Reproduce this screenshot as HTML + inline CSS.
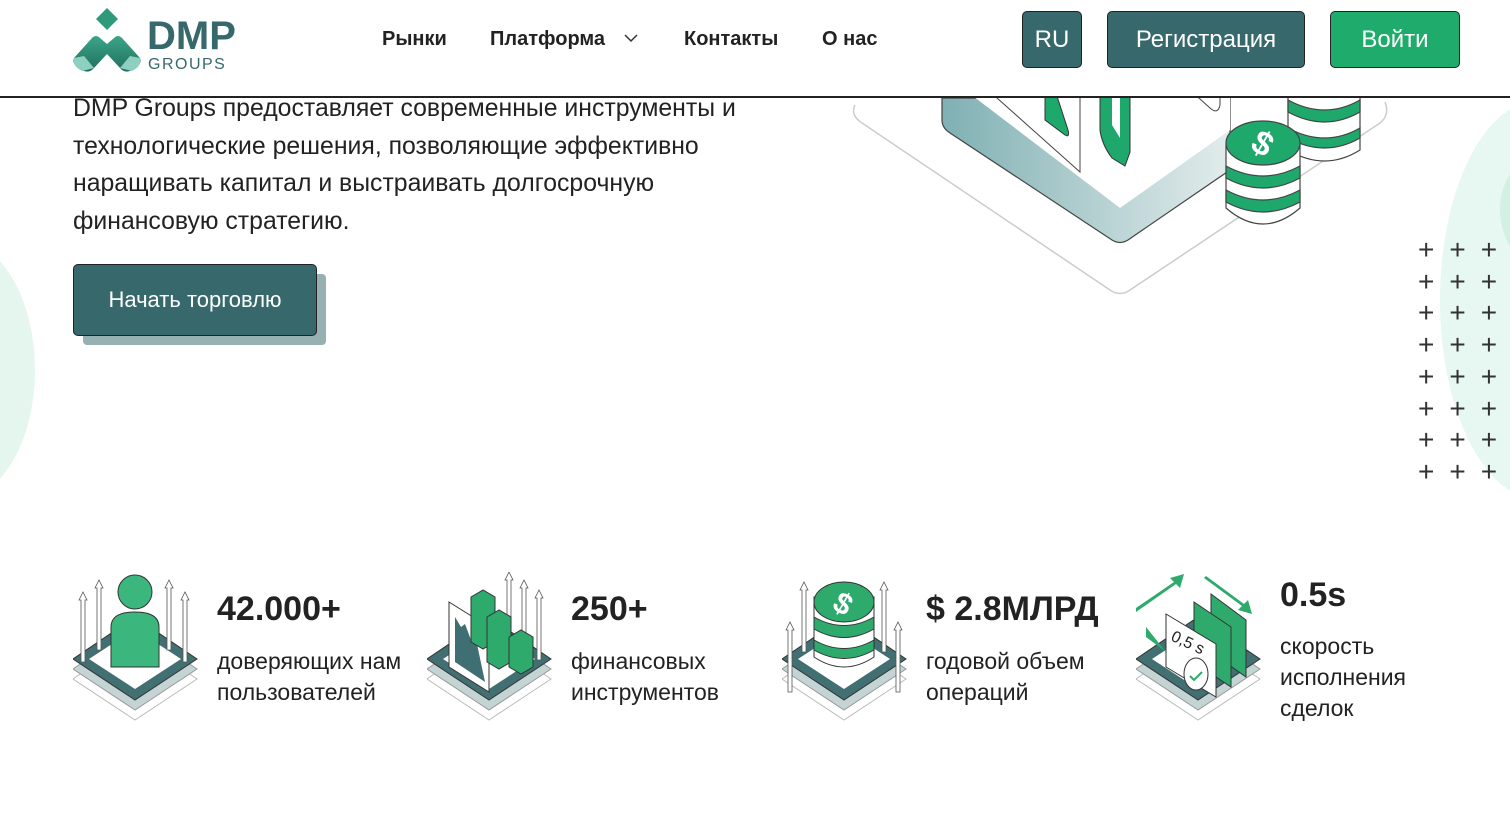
<!DOCTYPE html>
<html><head><meta charset="utf-8"><style>
*{margin:0;padding:0;box-sizing:border-box}
body{width:1510px;height:817px;overflow:hidden;background:#fff;font-family:"Liberation Sans",sans-serif;color:#222;position:relative}
.hdr{position:absolute;left:0;top:0;width:1510px;height:98px;border-bottom:2px solid #222;background:#fff;z-index:5}
.nav{position:absolute;top:28px;font-size:20px;font-weight:bold;color:#222}
.btn{position:absolute;top:11px;height:57px;border:1px solid #222;border-radius:5px;color:#fff;font-size:24px;display:flex;align-items:center;justify-content:center}
.p{position:absolute;left:73px;top:90px;font-size:24.8px;line-height:37.5px;color:#222;width:690px}
.stat h{position:absolute;font-size:34px;font-weight:bold;color:#222}
.stat p{position:absolute;font-size:23px;line-height:31px;color:#222}
.plus{position:absolute;left:1418px;top:234px;font-size:28px;line-height:31.7px;letter-spacing:15px;color:#333;font-weight:300;white-space:nowrap}
</style></head><body>
<div style="position:absolute;left:-120px;top:240px;width:155px;height:260px;border-radius:50%;background:#e5f6ef"></div>
<div style="position:absolute;left:1440px;top:100px;width:200px;height:400px;border-radius:50%;background:#e7f7f1"></div>
<div style="position:absolute;left:1500px;top:150px;width:100px;height:120px;border-radius:50%;background:#d2f0e4"></div>

<svg style="position:absolute;left:840px;top:90px" width="560" height="210" viewBox="0 0 560 210">
<path d="M15 15 Q10 25 22 33 L270 200 Q280 207 290 200 L540 33 Q550 25 545 12" fill="none" stroke="#ccc" stroke-width="1.5"/>
<defs><linearGradient id="g1" x1="0" x2="1"><stop offset="0" stop-color="#7fb0b3"/><stop offset="1" stop-color="#e3ecec"/></linearGradient></defs>
<path d="M102 8 L102 30 Q102 38 110 43 L272 150 Q280 155 288 150 L390 80 L390 8 Z" fill="url(#g1)" stroke="#444" stroke-width="1.2"/>
<path d="M125 0 L280 118 L390 40 L390 0 Z" fill="#fff"/>
<path d="M148 0 L240 82 L240 0" fill="#fff" stroke="#444" stroke-width="1"/>
<path d="M215 0 L228 40 Q230 48 225 45 L205 30 L205 0" fill="#1fa86c" stroke="#333"/>
<path d="M260 0 L260 40 Q262 55 272 68 L285 76 L290 62 L290 0Z" fill="#1fa86c" stroke="#333"/>
<path d="M272 0 L272 35 L280 48 L280 0Z" fill="#fff"/>
<path d="M350 0 L370 18 Q378 25 380 15 L380 0" fill="#fff" stroke="#444"/>
<g stroke="#444" stroke-width="1.2">
<path d="M448 0 L448 60 Q485 82 520 60 L520 0Z" fill="#fff"/>
<path d="M448 10 Q485 30 520 10 L520 22 Q485 42 448 22Z" fill="#1fa86c"/>
<path d="M448 38 Q485 58 520 38 L520 48 Q485 68 448 48Z" fill="#1fa86c"/>
<path d="M386 55 L386 118 Q423 150 460 118 L460 55Z" fill="#fff"/>
<path d="M386 76 Q423 96 460 76 L460 88 Q423 108 386 88Z" fill="#1fa86c"/>
<path d="M386 100 Q423 120 460 100 L460 112 Q423 132 386 112Z" fill="#1fa86c"/>
<ellipse cx="423" cy="53" rx="37" ry="22" fill="#1fa86c"/>
</g>
<text x="423" y="65" font-size="34" font-weight="bold" fill="#fff" text-anchor="middle" transform="rotate(30 423 53)" font-family="Liberation Sans">$</text>
</svg>

<div class="p">DMP Groups предоставляет современные инструменты и технологические решения, позволяющие эффективно наращивать капитал и выстраивать долгосрочную финансовую стратегию.</div>

<div style="position:absolute;left:83px;top:274px;width:243px;height:71px;background:#97b1b2;border-radius:4px"></div>
<div style="position:absolute;left:73px;top:264px;width:244px;height:72px;background:#36686c;border:1px solid #222;border-radius:5px;color:#fff;font-size:22px;display:flex;align-items:center;justify-content:center">Начать торговлю</div>

<div class="plus">+++<br>+++<br>+++<br>+++<br>+++<br>+++<br>+++<br>+++</div>

<div class="hdr">
<svg style="position:absolute;left:72px;top:8px" width="70" height="65" viewBox="0 0 70 65">
<defs><linearGradient id="lg" x1="0" y1="0" x2="0" y2="1"><stop offset="0" stop-color="#3ba58a"/><stop offset="1" stop-color="#1f6f5c"/></linearGradient></defs>
<path d="M35 0 L46 11 L35 22 L24 11Z" fill="#2f9a7b"/>
<path d="M2 50 L20 30 Q24 26 28 30 L35 36 L42 30 Q46 26 50 30 L68 50 Q70 54 66 58 L58 63 Q52 65 48 60 L35 46 L22 60 Q18 65 12 63 L4 58 Q0 54 2 50Z" fill="url(#lg)"/>
<path d="M2 50 Q0 58 10 63 L22 60 L12 48Z" fill="#8fcfc0"/>
<path d="M68 50 Q70 58 60 63 L48 60 L58 48Z" fill="#8fcfc0"/>
</svg>
<div style="position:absolute;left:147px;top:14px;font-size:40px;font-weight:bold;color:#36686c">DMP</div>
<div style="position:absolute;left:148px;top:56px;font-size:16px;color:#36686c;letter-spacing:1.5px">GROUPS</div>
<div class="nav" style="left:382px">Рынки</div>
<div class="nav" style="left:490px">Платформа</div>
<svg style="position:absolute;left:624px;top:34px" width="14" height="9"><path d="M1 1 L7 7 L13 1" fill="none" stroke="#333" stroke-width="1.5"/></svg>
<div class="nav" style="left:684px">Контакты</div>
<div class="nav" style="left:822px">О нас</div>
<div class="btn" style="left:1022px;width:60px;background:#36686c">RU</div>
<div class="btn" style="left:1107px;width:198px;background:#36686c">Регистрация</div>
<div class="btn" style="left:1330px;width:130px;background:#1fab6c">Войти</div>
</div>

<svg width="0" height="0" style="position:absolute"><defs>
<g id="base">
<path d="M62 65 L124 107 L62 148 L0 107Z" fill="none" stroke="#bbb"/>
<path d="M62 55 L124 97 L62 138 L0 97Z" fill="#c4d4d4" stroke="#999"/>
<path d="M62 45 L124 87 L62 128 L0 87Z" fill="#416f72" stroke="#333"/>
<path d="M62 57 L108 87 L62 117 L16 87Z" fill="#fff"/>
</g>
<g id="arr" fill="#fff" stroke="#555" stroke-width="0.8"><path d="M0 8 L4 0 L8 8 L6 8 L6 70 L2 70 L2 8Z"/></g>
</defs></svg>

<svg style="position:absolute;left:73px;top:572px" width="130" height="155">
<use href="#base" y="0"/>
<use href="#arr" x="6" y="20"/><use href="#arr" x="22" y="8"/><use href="#arr" x="92" y="8"/><use href="#arr" x="108" y="20"/>
<circle cx="62" cy="20" r="17" fill="#3bb77e" stroke="#333"/>
<path d="M38 95 L38 55 Q38 40 62 40 Q86 40 86 55 L86 95Z" fill="#3bb77e" stroke="#333"/>
</svg>
<div class="stat"><h style="left:217px;top:590px">42.000+</h><p style="left:217px;top:646px">доверяющих нам<br>пользователей</p></div>

<svg style="position:absolute;left:427px;top:572px" width="130" height="155">
<use href="#base"/>
<use href="#arr" x="78" y="0"/><use href="#arr" x="93" y="8"/><use href="#arr" x="108" y="18"/>
<path d="M22 30 L62 55 L62 120 L22 95Z" fill="#fff" stroke="#333"/>
<path d="M28 45 L34 55 L38 52 L44 68 L50 72 L58 110 L28 90Z" fill="#3f6f72"/>
<path d="M44 25 L56 18 L68 25 L68 70 L56 77 L44 70Z" fill="#2eab6c" stroke="#333"/>
<path d="M60 45 L72 38 L84 45 L84 90 L72 97 L60 90Z" fill="#2eab6c" stroke="#333"/>
<path d="M82 65 L94 58 L106 65 L106 95 L94 102 L82 95Z" fill="#2eab6c" stroke="#333"/>
</svg>
<div class="stat"><h style="left:571px;top:590px">250+</h><p style="left:571px;top:646px">финансовых<br>инструментов</p></div>

<svg style="position:absolute;left:782px;top:572px" width="130" height="155">
<use href="#base"/>
<use href="#arr" x="4" y="50"/><use href="#arr" x="18" y="10"/><use href="#arr" x="98" y="10"/><use href="#arr" x="112" y="50"/>
<path d="M32 25 L32 85 Q62 105 92 85 L92 25Z" fill="#fff" stroke="#333"/>
<path d="M32 45 Q62 62 92 45 L92 57 Q62 74 32 57Z" fill="#2eab6c" stroke="#333"/>
<path d="M32 68 Q62 85 92 68 L92 78 Q62 95 32 78Z" fill="#2eab6c" stroke="#333"/>
<ellipse cx="62" cy="30" rx="30" ry="20" fill="#2eab6c" stroke="#333"/>
<text x="62" y="42" font-size="30" font-weight="bold" fill="#fff" text-anchor="middle" transform="rotate(30 62 30)" font-family="Liberation Sans">$</text>
</svg>
<div class="stat"><h style="left:926px;top:590px">$ 2.8МЛРД</h><p style="left:926px;top:646px">годовой объем<br>операций</p></div>

<svg style="position:absolute;left:1136px;top:572px" width="130" height="155">
<use href="#base"/>
<path d="M0 40 L40 12 L44 16 L48 2 L34 6 L38 10 L0 36Z" fill="#2eab6c"/>
<path d="M68 6 L106 34 L102 38 L116 42 L112 28 L108 32 L70 4Z" fill="#2eab6c"/>
<path d="M10 65 L30 80 L10 55Z" fill="#2eab6c"/>
<path d="M75 22 L110 48 L110 105 L75 80Z" fill="#2eab6c" stroke="#333"/>
<path d="M58 30 L95 55 L95 115 L58 90Z" fill="#2eab6c" stroke="#333"/>
<path d="M30 42 L80 72 L80 125 L30 95Z" fill="#fff" stroke="#333"/>
<text x="34" y="68" font-size="16" fill="#222" transform="rotate(25 34 68)" font-family="Liberation Sans">0,5 s</text>
<ellipse cx="60" cy="102" rx="12" ry="16" fill="#fff" stroke="#333"/>
<path d="M54 104 L58 108 L66 100" fill="none" stroke="#2eab6c" stroke-width="2"/>
</svg>
<div class="stat"><h style="left:1280px;top:576px">0.5s</h><p style="left:1280px;top:631px">скорость<br>исполнения<br>сделок</p></div>
</body></html>
